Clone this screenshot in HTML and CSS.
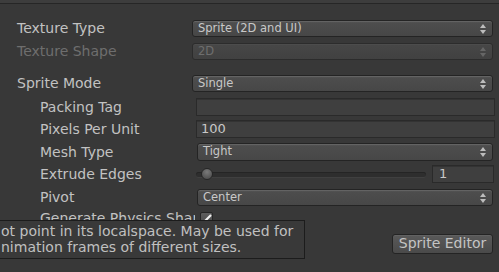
FILE: index.html
```html
<!DOCTYPE html>
<html>
<head>
<meta charset="utf-8">
<link rel="stylesheet" href="styles.css">
</head>
<body>
<div class="top-bar"></div>
<div class="inspector">
  <div class="row r1">
    <span class="label">Texture Type</span>
    <div class="popup">Sprite (2D and UI)<svg class="arrows" viewBox="0 0 6 10" width="6" height="10"><path d="M3 0 L6 4 L0 4 Z M0 6 L6 6 L3 10 Z"/></svg></div>
  </div>
  <div class="row r2 disabled">
    <span class="label">Texture Shape</span>
    <div class="popup">2D<svg class="arrows" viewBox="0 0 6 10" width="6" height="10"><path d="M3 0 L6 4 L0 4 Z M0 6 L6 6 L3 10 Z"/></svg></div>
  </div>
  <div class="row r3">
    <span class="label">Sprite Mode</span>
    <div class="popup">Single<svg class="arrows" viewBox="0 0 6 10" width="6" height="10"><path d="M3 0 L6 4 L0 4 Z M0 6 L6 6 L3 10 Z"/></svg></div>
  </div>
  <div class="row sub r4">
    <span class="label">Packing Tag</span>
    <div class="field"></div>
  </div>
  <div class="row sub r5">
    <span class="label">Pixels Per Unit</span>
    <div class="field">100</div>
  </div>
  <div class="row sub r6">
    <span class="label">Mesh Type</span>
    <div class="popup">Tight<svg class="arrows" viewBox="0 0 6 10" width="6" height="10"><path d="M3 0 L6 4 L0 4 Z M0 6 L6 6 L3 10 Z"/></svg></div>
  </div>
  <div class="row sub r7">
    <span class="label">Extrude Edges</span>
    <div class="slider"><div class="track"></div><div class="knob"></div></div>
    <div class="field num">1</div>
  </div>
  <div class="row sub r8">
    <span class="label">Pivot</span>
    <div class="popup">Center<svg class="arrows" viewBox="0 0 6 10" width="6" height="10"><path d="M3 0 L6 4 L0 4 Z M0 6 L6 6 L3 10 Z"/></svg></div>
  </div>
  <div class="row sub r9">
    <span class="label clip">Generate Physics Shape</span>
    <div class="checkbox"><svg viewBox="0 0 12 12" width="12" height="12"><path d="M3 9 L10 2" stroke="#f2f2f2" stroke-width="2.2" fill="none"/></svg></div>
  </div>
  <div class="footer">
    <div class="button">Sprite Editor</div>
  </div>
</div>
<div class="tooltip">
  <div>ot point in its localspace. May be used for</div>
  <div>nimation frames of different sizes.</div>
</div>
</body>
</html>
```
FILE: styles.css
```css
html, body {
  margin: 0;
  padding: 0;
  background: #383838;
  width: 499px;
  height: 272px;
  overflow: hidden;
  font-family: "DejaVu Sans", sans-serif;
  color: #c2c2c2;
}
.top-bar {
  height: 3px;
  background: #3d3d3d;
  border-bottom: 1px solid #262626;
}
.inspector {
  display: flex;
  flex-direction: column;
  padding-top: 1px;
}
.row {
  display: flex;
  align-items: center;
  padding-left: 17px;
}
.label {
  width: 175px;
  flex: none;
  font-size: 14px;
  white-space: nowrap;
  line-height: 17px;
}
.row.sub .label {
  padding-left: 23px;
  width: 152px;
}
.label.clip {
  overflow: hidden;
  width: 155px !important;
}
.r1 { margin-top: 15px; height: 17px; }
.r2 { margin-top: 6px; height: 17px; }
.r3 { margin-top: 15px; height: 17px; }
.r4 { margin-top: 6px; height: 18px; }
.r5 { margin-top: 4px; height: 18px; }
.r6 { margin-top: 5px; height: 18px; }
.r7 { margin-top: 4px; height: 18px; }
.r8 { margin-top: 6px; height: 17px; }
.r9 { margin-top: 6px; height: 13px; align-items: flex-start; }
.r9 .label { margin-top: -2px; }

.popup {
  position: relative;
  box-sizing: border-box;
  height: 100%;
  flex: 1;
  margin-right: 6px;
  border: 1px solid #242424;
  border-radius: 3px;
  background: linear-gradient(#5b5b5b 0, #4d4d4d 2px, #474747 100%);
  box-shadow: inset 0 1px 0 #636363;
  font-size: 11.5px;
  line-height: 15px;
  padding-left: 5px;
  color: #c8c8c8;
  white-space: nowrap;
}
.row.sub .popup {
  margin-left: 5px;
}
.arrows {
  position: absolute;
  right: 6px;
  top: 3px;
  fill: #bdbdbd;
}
.disabled .label { color: #6e6e6e; }
.disabled .popup {
  color: #6e6e6e;
  background: linear-gradient(#474747, #414141);
  border-color: #2c2c2c;
  box-shadow: inset 0 1px 0 #4c4c4c;
}
.disabled .arrows { fill: #666; }

.field {
  box-sizing: border-box;
  height: 100%;
  flex: 1;
  margin-left: 4px;
  margin-right: 4px;
  background: #3f3f3f;
  border: 1px solid #2a2a2a;
  box-shadow: inset 0 1px 0 #333;
  font-size: 13px;
  line-height: 16px;
  padding-left: 4px;
  color: #c8c8c8;
}
.field.num {
  flex: none;
  width: 62px;
  margin-left: 6px;
  margin-right: 5px;
  padding-left: 6px;
}
.slider {
  position: relative;
  flex: 1;
  height: 100%;
  margin-left: 4px;
}
.track {
  position: absolute;
  left: 0;
  right: 0;
  top: 7px;
  height: 5px;
  border-radius: 3px;
  background: #2e2e2e;
  box-shadow: inset 0 1px 0 #252525, 0 1px 0 #404040;
}
.knob {
  position: absolute;
  left: 5px;
  top: 3px;
  width: 12px;
  height: 12px;
  box-sizing: border-box;
  border-radius: 50%;
  border: 1px solid #262626;
  background: radial-gradient(circle at 50% 30%, #7a7a7a, #5a5a5a 60%, #4a4a4a);
}
.checkbox {
  margin-left: 5px;
  width: 13px;
  height: 13px;
  box-sizing: border-box;
  border: 1px solid #262626;
  border-radius: 2px;
  background: linear-gradient(#5e5e5e, #4a4a4a);
}
.checkbox svg { display: block; }

.footer {
  display: flex;
  justify-content: flex-end;
  margin-top: 9px;
  padding-right: 6px;
}
.button {
  box-sizing: border-box;
  width: 101px;
  height: 20px;
  border: 1px solid #242424;
  border-radius: 3px;
  background: linear-gradient(#595959, #4a4a4a);
  box-shadow: inset 0 1px 0 #626262;
  font-size: 14px;
  line-height: 17px;
  text-align: center;
  color: #c4c4c4;
}

.tooltip {
  position: absolute;
  left: -10px;
  top: 220px;
  width: 315px;
  height: 39px;
  box-sizing: border-box;
  border: 1px solid #1c1c1c;
  background: #393939;
  padding: 2px 0 0 10px;
  font-size: 14px;
  line-height: 16px;
  color: #c0c0c0;
  white-space: nowrap;
}
```
